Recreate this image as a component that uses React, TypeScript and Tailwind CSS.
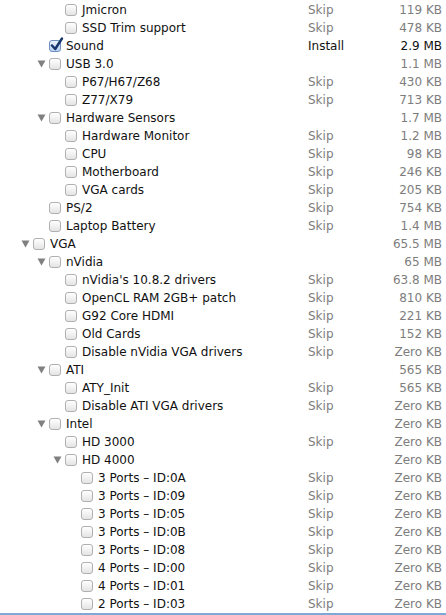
import React from "react";

interface Item {
  name: string;
  level: number;
  arrow?: boolean;
  checked?: boolean;
  action?: string;
  size: string;
}

const items: Item[] = [
  { name: "Jmicron", level: 2, action: "Skip", size: "119 KB" },
  { name: "SSD Trim support", level: 2, action: "Skip", size: "478 KB" },
  { name: "Sound", level: 1, checked: true, action: "Install", size: "2.9 MB" },
  { name: "USB 3.0", level: 1, arrow: true, size: "1.1 MB" },
  { name: "P67/H67/Z68", level: 2, action: "Skip", size: "430 KB" },
  { name: "Z77/X79", level: 2, action: "Skip", size: "713 KB" },
  { name: "Hardware Sensors", level: 1, arrow: true, size: "1.7 MB" },
  { name: "Hardware Monitor", level: 2, action: "Skip", size: "1.2 MB" },
  { name: "CPU", level: 2, action: "Skip", size: "98 KB" },
  { name: "Motherboard", level: 2, action: "Skip", size: "246 KB" },
  { name: "VGA cards", level: 2, action: "Skip", size: "205 KB" },
  { name: "PS/2", level: 1, action: "Skip", size: "754 KB" },
  { name: "Laptop Battery", level: 1, action: "Skip", size: "1.4 MB" },
  { name: "VGA", level: 0, arrow: true, size: "65.5 MB" },
  { name: "nVidia", level: 1, arrow: true, size: "65 MB" },
  { name: "nVidia's 10.8.2 drivers", level: 2, action: "Skip", size: "63.8 MB" },
  { name: "OpenCL RAM 2GB+ patch", level: 2, action: "Skip", size: "810 KB" },
  { name: "G92 Core HDMI", level: 2, action: "Skip", size: "221 KB" },
  { name: "Old Cards", level: 2, action: "Skip", size: "152 KB" },
  { name: "Disable nVidia VGA drivers", level: 2, action: "Skip", size: "Zero KB" },
  { name: "ATI", level: 1, arrow: true, size: "565 KB" },
  { name: "ATY_Init", level: 2, action: "Skip", size: "565 KB" },
  { name: "Disable ATI VGA drivers", level: 2, action: "Skip", size: "Zero KB" },
  { name: "Intel", level: 1, arrow: true, size: "Zero KB" },
  { name: "HD 3000", level: 2, action: "Skip", size: "Zero KB" },
  { name: "HD 4000", level: 2, arrow: true, size: "Zero KB" },
  { name: "3 Ports – ID:0A", level: 3, action: "Skip", size: "Zero KB" },
  { name: "3 Ports – ID:09", level: 3, action: "Skip", size: "Zero KB" },
  { name: "3 Ports – ID:05", level: 3, action: "Skip", size: "Zero KB" },
  { name: "3 Ports – ID:0B", level: 3, action: "Skip", size: "Zero KB" },
  { name: "3 Ports – ID:08", level: 3, action: "Skip", size: "Zero KB" },
  { name: "4 Ports – ID:00", level: 3, action: "Skip", size: "Zero KB" },
  { name: "4 Ports – ID:01", level: 3, action: "Skip", size: "Zero KB" },
  { name: "2 Ports – ID:03", level: 3, action: "Skip", size: "Zero KB" },
];

const indent = ["pl-[21px]", "pl-[37px]", "pl-[53px]", "pl-[69px]"];

const Checkbox: React.FC<{ checked?: boolean }> = ({ checked }) =>
  checked ? (
    <div className="relative w-[12px] h-[12px] rounded-[3px] border border-[#6b8fc2] bg-gradient-to-b from-[#eaf2fc] to-[#b9d1ee]">
      <svg className="absolute left-[0px] top-[-4px]" width="14" height="15" viewBox="0 0 14 15">
        <path d="M2 8.5 L5.2 12 L12 1.5" fill="none" stroke="#14346a" strokeWidth="2.4" strokeLinecap="round" strokeLinejoin="round" />
      </svg>
    </div>
  ) : (
    <div className="w-[12px] h-[12px] rounded-[3px] border border-[#b0b0b0] bg-gradient-to-b from-white to-[#e4e4e4]" />
  );

const Arrow: React.FC = () => (
  <svg width="9" height="8" viewBox="0 0 9 8">
    <path d="M0.5 0.5 H8.5 L4.5 7.5 Z" fill="#808080" />
  </svg>
);

export default function App() {
  return (
    <div className="w-[446px] h-[615px] pt-[1px] bg-white overflow-hidden font-['DejaVu_Sans',sans-serif] text-[12px]">
      {items.map((item, i) => (
        <div key={i} className="flex items-center h-[18px]">
          <div className={`flex items-center flex-1 ${indent[item.level]}`}>
            <div className="w-[12px] flex items-center">{item.arrow && <Arrow />}</div>
            <Checkbox checked={item.checked} />
            <span className="ml-[5px] text-[#111]">{item.name}</span>
          </div>
          <div className={`w-[80px] ${item.checked ? "text-[#111]" : "text-[#7d7d7d]"}`}>{item.action}</div>
          <div className={`w-[54px] mr-[4px] text-right ${item.checked ? "text-[#111]" : "text-[#7d7d7d]"}`}>{item.size}</div>
        </div>
      ))}
      <div className="h-[2px] bg-[#7fa8d6]" />
    </div>
  );
}
